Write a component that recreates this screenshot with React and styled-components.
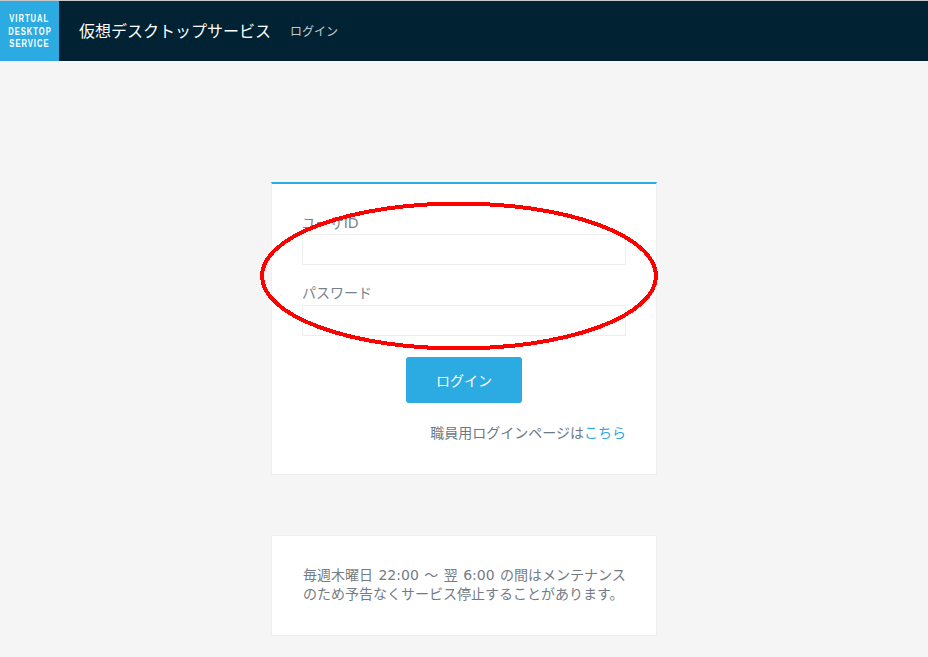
import React from "react";
import styled, { createGlobalStyle } from "styled-components";

const Global = createGlobalStyle`
  html, body { margin: 0; padding: 0; background: #f5f5f5; }
  body { font-family: "DejaVu Sans", "Noto Sans CJK JP", sans-serif; color: #6d7a85; overflow: hidden; }
  * { box-sizing: border-box; }
`;
const Page = styled.div`
  position: relative;
  width: 928px;
  height: 657px;
  overflow: hidden;
`;
const Header = styled.header`
  display: flex;
  align-items: center;
  height: 61px;
  border-top: 1px solid #c8c8c8;
  background: #012233;
`;
const Logo = styled.div`
  width: 59px;
  height: 60px;
  flex: none;
  display: flex;
  flex-direction: column;
  align-items: center;
  justify-content: center;
  background: #2babe2;
  color: #fff;
  font-family: "Liberation Sans", sans-serif;
  font-weight: 700;
  font-size: 11.5px;
  line-height: 12.5px;
  letter-spacing: 1.5px;
`;
const LogoLine = styled.span`
  display: block;
  white-space: nowrap;
  transform: scaleX(0.66);
`;
const Title = styled.h1`
  margin: 0 0 3px 20px;
  font-size: 16px;
  font-weight: 400;
  color: #fff;
`;
const Sub = styled.span`
  margin: 0 0 1px 19px;
  font-size: 12px;
  color: #c4c9cc;
`;
const Main = styled.main`
  display: flex;
  flex-direction: column;
  align-items: center;
  gap: 60px;
  padding-top: 121px;
`;
const Card = styled.section`
  width: 386px;
  background: #fff;
  border: 1px solid #eeeeee;
  border-top: ${(p) => (p.$accent ? "2px solid #2babe2" : "1px solid #eeeeee")};
`;
const Form = styled.form`
  display: flex;
  flex-direction: column;
  height: 290px;
  padding: 29px 30px 0;
`;
const Label = styled.label`
  display: block;
  font-size: 14px;
  line-height: 20px;
  margin-bottom: ${(p) => p.$gap}px;
  color: #77838c;
`;
const Input = styled.input`
  display: block;
  width: 100%;
  height: 31px;
  margin-bottom: 18px;
  border: 1px solid #eeeeee;
  background: #fff;
  outline: none;
`;
const Button = styled.button`
  align-self: center;
  width: 116px;
  height: 46px;
  margin: 3px 0 0;
  border: none;
  border-radius: 3px;
  background: #2babe2;
  color: #fff;
  font: inherit;
  font-size: 14px;
`;
const StaffLine = styled.p`
  margin: 20px 0 0;
  text-align: right;
  font-size: 14px;
  line-height: 20px;
  color: #6d7a85;
`;
const Link = styled.a`
  color: #2babe2;
`;
const Notice = styled.section`
  width: 386px;
  height: 101px;
  padding: 30px 31px;
  background: #fff;
  border: 1px solid #eeeeee;
  font-size: 14px;
  line-height: 19px;
  word-spacing: 1px;
  color: #737c84;
  white-space: nowrap;
`;
const Circle = styled.svg`
  position: absolute;
  left: 0;
  top: 0;
  pointer-events: none;
`;

export default function App() {
  return (
    <Page>
      <Global />
      <Header>
        <Logo>
          <LogoLine>VIRTUAL</LogoLine>
          <LogoLine>DESKTOP</LogoLine>
          <LogoLine>SERVICE</LogoLine>
        </Logo>
        <Title>仮想デスクトップサービス</Title>
        <Sub>ログイン</Sub>
      </Header>
      <Main>
        <Card $accent>
          <Form onSubmit={(e) => e.preventDefault()}>
            <Label $gap={1}>ユーザID</Label>
            <Input type="text" />
            <Label $gap={2}>パスワード</Label>
            <Input type="password" />
            <Button type="submit">ログイン</Button>
            <StaffLine>
              職員用ログインページは<Link>こちら</Link>
            </StaffLine>
          </Form>
        </Card>
        <Notice>
          毎週木曜日 22:00 ～ 翌 6:00 の間はメンテナンス
          <br />
          のため予告なくサービス停止することがあります。
        </Notice>
      </Main>
      <Circle width="928" height="657" viewBox="0 0 928 657" shapeRendering="crispEdges">
        <ellipse cx="459" cy="276" rx="197" ry="72.5" fill="none" stroke="#ff0000" strokeWidth="4" />
      </Circle>
    </Page>
  );
}
